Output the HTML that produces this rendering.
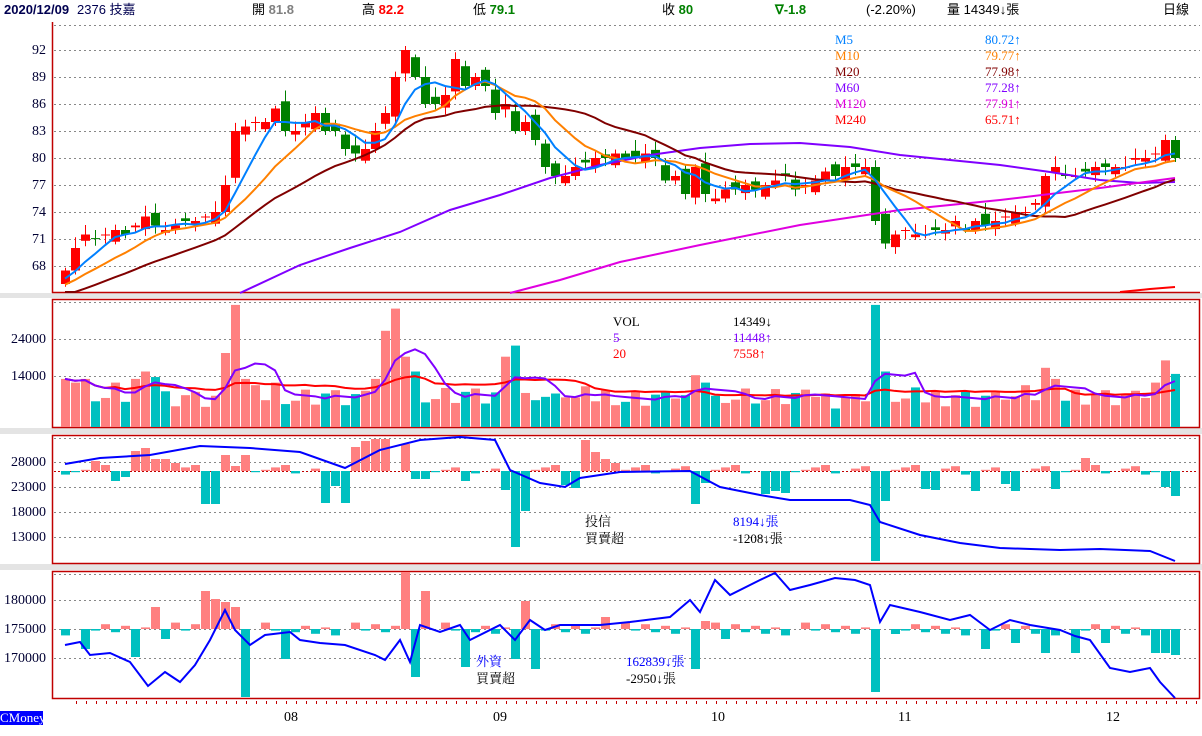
<!DOCTYPE html>
<html><head><meta charset="utf-8">
<style>
html,body{margin:0;padding:0;background:#fff;}
body{width:1202px;height:736px;position:relative;overflow:hidden;font-family:"Liberation Serif","Noto Serif CJK SC","WenQuanYi Zen Hei",serif;font-size:13px;}
.t{position:absolute;white-space:nowrap;line-height:14px;}
.h{font-family:"Liberation Sans","WenQuanYi Zen Hei",sans-serif;font-size:13px;top:3px;color:#000;}
.b{font-weight:bold;}
.yl{position:absolute;width:46px;text-align:right;left:0;font-size:14px;color:#000033;}
svg{position:absolute;left:0;top:0;}
</style></head><body>
<svg id="s" width="1202" height="736" xmlns="http://www.w3.org/2000/svg"></svg>

<div class="t h b" style="left:4px;color:#000050">2020/12/09</div>
<div class="t h" style="left:77px;color:#000050">2376 技嘉</div>
<div class="t h" style="left:252px">開 <b style="color:#808080">81.8</b></div>
<div class="t h" style="left:362px">高 <b style="color:#f00">82.2</b></div>
<div class="t h" style="left:473px">低 <b style="color:#008000">79.1</b></div>
<div class="t h" style="left:662px">收 <b style="color:#008000">80</b></div>
<div class="t h b" style="left:775px;color:#008000">∇-1.8</div>
<div class="t h" style="left:866px">(-2.20%)</div>
<div class="t h" style="left:947px">量 14349↓張</div>
<div class="t h" style="left:1163px">日線</div>

<div class="yl" style="top:43px">92</div>
<div class="yl" style="top:70px">89</div>
<div class="yl" style="top:97px">86</div>
<div class="yl" style="top:124px">83</div>
<div class="yl" style="top:151px">80</div>
<div class="yl" style="top:178px">77</div>
<div class="yl" style="top:205px">74</div>
<div class="yl" style="top:232px">71</div>
<div class="yl" style="top:259px">68</div>

<div class="yl" style="top:332px">24000</div>
<div class="yl" style="top:369px">14000</div>
<div class="yl" style="top:455px">28000</div>
<div class="yl" style="top:480px">23000</div>
<div class="yl" style="top:505px">18000</div>
<div class="yl" style="top:530px">13000</div>
<div class="yl" style="top:593px">180000</div>
<div class="yl" style="top:622px">175000</div>
<div class="yl" style="top:651px">170000</div>

<div class="t" style="left:835px;top:33px;color:#0080ff">M5</div><div class="t" style="left:985px;top:33px;color:#0080ff">80.72↑</div>
<div class="t" style="left:835px;top:49px;color:#ff8000">M10</div><div class="t" style="left:985px;top:49px;color:#ff8000">79.77↑</div>
<div class="t" style="left:835px;top:65px;color:#800000">M20</div><div class="t" style="left:985px;top:65px;color:#800000">77.98↑</div>
<div class="t" style="left:835px;top:81px;color:#8000ff">M60</div><div class="t" style="left:985px;top:81px;color:#8000ff">77.28↑</div>
<div class="t" style="left:835px;top:97px;color:#e000e0">M120</div><div class="t" style="left:985px;top:97px;color:#e000e0">77.91↑</div>
<div class="t" style="left:835px;top:113px;color:#f00">M240</div><div class="t" style="left:985px;top:113px;color:#f00">65.71↑</div>

<div class="t" style="left:613px;top:315px;color:#000">VOL</div><div class="t" style="left:733px;top:315px;color:#000">14349↓</div>
<div class="t" style="left:613px;top:331px;color:#8000ff">5</div><div class="t" style="left:733px;top:331px;color:#8000ff">11448↑</div>
<div class="t" style="left:613px;top:347px;color:#f00">20</div><div class="t" style="left:733px;top:347px;color:#f00">7558↑</div>

<div class="t" style="left:585px;top:515px">投信</div><div class="t" style="left:733px;top:515px;color:#0000ff">8194↓張</div>
<div class="t" style="left:585px;top:532px">買賣超</div><div class="t" style="left:733px;top:532px">-1208↓張</div>

<div class="t" style="left:476px;top:655px;color:#0000ff">外資</div><div class="t" style="left:626px;top:655px;color:#0000ff">162839↓張</div>
<div class="t" style="left:476px;top:672px">買賣超</div><div class="t" style="left:626px;top:672px">-2950↓張</div>

<div class="t" style="left:284px;top:711px;font-size:14px">08</div>
<div class="t" style="left:493px;top:711px;font-size:14px">09</div>
<div class="t" style="left:711px;top:711px;font-size:14px">10</div>
<div class="t" style="left:898px;top:711px;font-size:14px">11</div>
<div class="t" style="left:1106px;top:711px;font-size:14px">12</div>
<div class="t" style="left:0;top:711px;background:#0000ff;color:#fff;width:43px;font-size:13px">CMoney</div>

<script>
var S=document.getElementById('s'),NS='http://www.w3.org/2000/svg',h='';
function R(x,y,w,hh,c){h+='<rect x="'+x+'" y="'+y+'" width="'+w+'" height="'+hh+'" fill="'+c+'"/>';}
function L(x1,y1,x2,y2,c,w,d){h+='<line x1="'+x1+'" y1="'+y1+'" x2="'+x2+'" y2="'+y2+'" stroke="'+c+'" stroke-width="'+(w||1)+'"'+(d?' stroke-dasharray="'+d+'"':'')+'/>';}
function P(pts,c,w){h+='<polyline fill="none" stroke="'+c+'" stroke-width="'+(w||2)+'" points="'+pts.map(function(p){return p[0]+','+p[1]}).join(' ')+'"/>';}
// gray bands
R(0,293,1202,5,'#e4e4e4');R(0,428,1202,6,'#e4e4e4');R(0,564,1202,6,'#e4e4e4');
// frames
L(52.5,22,52.5,293,'#c00000',1.5);L(52,292.5,1200,292.5,'#c00000',1.5);
[[299,428],[435,564],[571,699]].forEach(function(a){h+='<rect x="52.5" y="'+(a[0]+.5)+'" width="1147" height="'+(a[1]-a[0]-1)+'" fill="none" stroke="#c00000" stroke-width="1.5"/>';});
// grids
[25,50,77,104,131,158,185,212,239,266].forEach(function(y){L(54,y+.5,1200,y+.5,'#888',1,'2,3');});
[302,339,376].forEach(function(y){L(54,y+.5,1198,y+.5,'#888',1,'2,3');});
[438,462,487,512,537].forEach(function(y){L(54,y+.5,1198,y+.5,'#888',1,'2,3');});
L(54,471.5,1198,471.5,'#c00000',1,'2,2');
[574,600,629,658].forEach(function(y){L(54,y+.5,1198,y+.5,'#888',1,'2,3');});
for(var x=76;x<1200;x+=10)L(x+.5,701,x+.5,704,'#c00000',1);
var C=[67.5,70,71.5,71,71.5,72,71.5,72.5,73.5,72.5,72,72.5,73,73,73.5,74,77,83,83.5,84,84,85.5,83,83,84,85,83,83,81,80.5,81,83,85,89,92,89,86,86,87,91,88,89,88,85,86,83,84,82,79,78,78,79,79.5,80,80,80.5,80,80,80.5,80,77.5,78,76,79,76,75.5,76.5,76.5,77,76.5,77,77.5,78,76.5,77,77.5,78.5,78,79,79,79,73,70.5,71.5,72,71.5,71.5,72,72,73,72,73,72.5,73,73.5,74,74,75,78,79,78,78,78.5,79,79,79,79,80,80,80.5,82,80];
var N=C.length;function X(i){return 65+i*10;}function Y(p){return 50+(92-p)*9;}
var O=[66];for(var i=1;i<N;i++)O.push(C[i-1]+((i*7)%5-2)*0.4);
for(i=0;i<N;i++){var o=O[i],c=C[i],up=c>=o,col=up?'#f00':'#008000',hi=Math.max(o,c)+0.3+((i*13)%7)*0.15,lo=Math.min(o,c)-0.3-((i*11)%5)*0.15;
L(X(i)+.5,Y(hi),X(i)+.5,Y(lo),col,1);var t=Y(Math.max(o,c)),b=Y(Math.min(o,c));R(X(i)-4,t,9,Math.max(1,b-t),col);}
var H=[];for(i=0;i<20;i++)H.push(62+i*0.25);var A=H.concat(C);
function MA(n){var r=[];for(var i=0;i<N;i++){var s=0;for(var k=0;k<n;k++)s+=A[i+20-k];r.push([X(i),Math.min(292,Y(s/n))]);}return r;}
P([[240,293],[300,265],[350,248],[400,232],[450,210],[500,195],[550,178],[600,165],[650,155],[700,148],[750,144],[800,143],[850,147],[900,155],[950,160],[1000,165],[1050,172],[1100,180],[1140,183],[1175,182]],'#8000ff');
P([[510,293],[560,280],[620,262],[700,245],[800,225],[900,210],[1000,200],[1100,188],[1175,178]],'#e000e0');
P([[1120,292],[1150,289],[1175,287]],'#f00');
P(MA(20),'#800000');P(MA(10),'#ff8000');P(MA(5),'#0080ff');
// volume
var V=[];for(i=0;i<N;i++)V.push(5000+((i*37)%11)*450+((i*53)%7)*300);
var ov={0:13000,1:12000,2:13000,5:12000,7:13000,8:15000,9:13500,16:20000,17:33000,18:13000,21:12000,31:13000,32:26000,33:32000,34:19000,35:15000,44:19000,45:22000,50:8000,63:14000,64:12000,81:33000,82:15000,98:16000,99:13000,109:12000,110:18000,111:14349};
for(var k in ov)V[k]=ov[k];
for(i=0;i<N;i++){var hh=V[i]*0.0037;R(X(i)-4,427-hh,9,hh,(i==0||C[i]>=C[i-1])?'#ff8080':'#00c0c0');}
function MAV(n){var r=[];for(var i=0;i<N;i++){var s=0,m=0;for(var k=0;k<n&&i-k>=0;k++){s+=V[i-k];m++;}r.push([X(i),427-s/m*0.0037]);}return r;}
P(MAV(20),'#f00');P(MAV(5),'#8000ff');
// panel 3 bars
function bars(base,arr,top,bot){for(var i=0;i<N;i++){var v=arr[i];if(v>0)R(X(i)-4,Math.max(top,base-v),9,Math.min(v,base-top),'#ff8080');else if(v<0)R(X(i)-4,base,9,Math.min(-v,bot-base),'#00c0c0');}}
var B3=[];for(i=0;i<N;i++)B3.push(((i*29)%9-3)*1.2);
var o3={3:10,5:-10,6:-6,7:20,8:23,9:12,10:12,11:8,14:-33,15:-33,16:16,17:5,18:16,26:-32,27:-15,28:-32,29:24,30:30,31:32,32:32,34:27,35:-8,36:-8,40:-10,44:-19,45:-76,46:-40,50:-14,51:-17,52:31,53:19,54:12,55:8,63:-33,64:-12,70:-23,71:-20,72:-22,81:-90,82:-30,86:-18,87:-19,91:-20,94:-13,95:-20,99:-18,102:13,110:-16,111:-25};
for(k in o3)B3[k]=o3[k];bars(471,B3,436,563);
P([[65,464],[100,458],[150,455],[200,446],[250,448],[300,452],[345,468],[380,450],[420,440],[460,437],[495,440],[510,470],[540,483],[565,487],[580,478],[620,472],[690,471],[720,487],[760,495],[790,500],[850,500],[870,505],[880,522],[920,535],[960,543],[1000,548],[1060,550],[1100,549],[1150,551],[1175,561]],'#0000ff');
// panel 4 bars
var B4=[];for(i=0;i<N;i++)B4.push(((i*31)%9-4)*1.6);
var o4={2:-20,7:-28,9:22,10:-10,14:38,15:30,16:27,17:22,18:-68,22:-30,34:57,35:-48,36:38,40:-38,45:-30,46:28,47:-40,54:12,63:-40,64:8,66:-10,81:-63,83:-5,92:-20,95:-14,98:-24,101:-24,104:-14,109:-24,110:-24,111:-26};
for(k in o4)B4[k]=o4[k];bars(629,B4,572,698);
P([[65,645],[80,642],[90,655],[110,653],[130,662],[148,686],[165,672],[180,682],[195,665],[210,640],[225,610],[235,630],[250,645],[265,635],[290,632],[300,640],[320,643],[345,645],[375,655],[385,660],[400,640],[410,662],[420,625],[440,632],[460,625],[470,640],[500,625],[515,640],[530,620],[545,630],[560,625],[600,625],[630,622],[670,617],[690,600],[700,612],[715,580],[730,595],[760,580],[775,573],[790,590],[810,585],[835,578],[855,580],[870,585],[880,622],[890,605],[920,612],[950,620],[970,615],[990,630],[1010,620],[1030,625],[1060,630],[1075,636],[1090,640],[1110,668],[1130,672],[1150,668],[1160,682],[1175,698]],'#0000ff');
S.innerHTML=h;
</script>
</body></html>
